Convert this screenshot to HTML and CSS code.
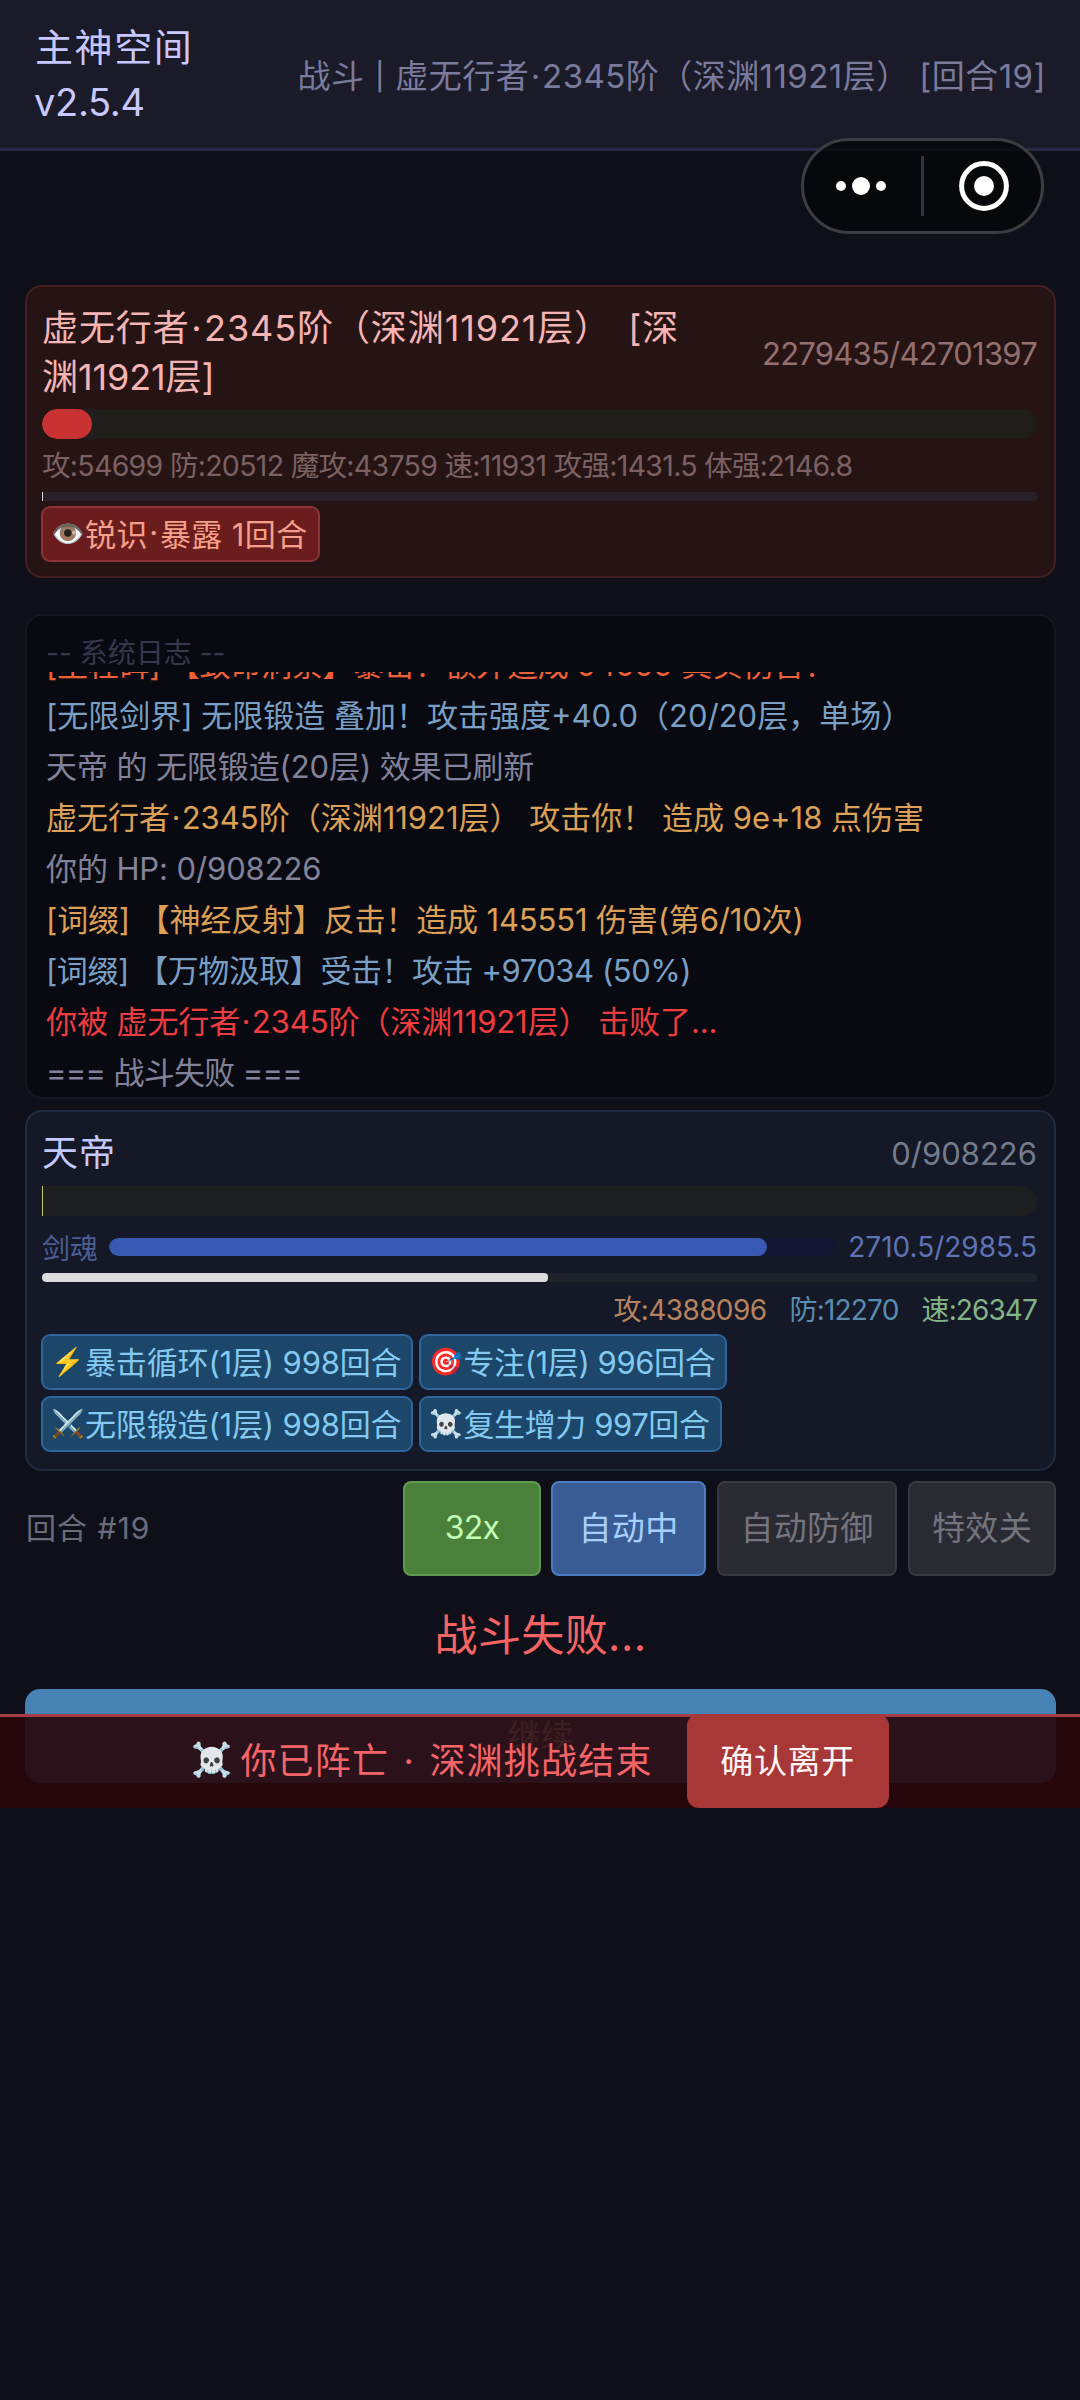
FILE: index.html
```
<!DOCTYPE html>
<html lang="zh-CN">
<head>
<meta charset="utf-8">
<title>主神空间</title>
<link rel="stylesheet" href="styles.css">
</head>
<body>
<header class="header">
  <h1 class="brand">主神空间<span class="version">v2.5.4</span></h1>
  <div class="location">战斗 <span class="sep">|</span> 虚无行者<span class="dot">·</span>2345阶（深渊11921层） [回合19]</div>
</header>

<div class="capsule">
  <svg class="capsule-dots" viewBox="0 0 50 20"><circle cx="5" cy="10" r="5"/><circle cx="25" cy="10" r="9"/><circle cx="45" cy="10" r="5"/></svg>
  <span class="capsule-divider"></span>
  <svg class="capsule-close" viewBox="0 0 50 50"><circle class="ring" cx="25" cy="25" r="22.4"/><circle cx="25" cy="25" r="10"/></svg>
</div>

<main class="main">
  <section class="card enemy">
    <div class="card-head">
      <div class="name"><span class="name-first">虚无行者<span class="dot">·</span>2345阶（深渊11921层） [深</span><br><span class="name-rest">渊11921层]</span></div>
      <div class="hp-text">2279435/42701397</div>
    </div>
    <div class="hp-bar"><div class="hp-fill" style="width:5%"></div></div>
    <div class="enemy-stats">攻:54699 防:20512 魔攻:43759 速:11931 攻强:1431.5 体强:2146.8</div>
    <div class="atb-bar"><div class="atb-fill" style="width:0.15%"></div></div>
    <div class="buffs"><span class="buff debuff"><i class="emoji">👁️</i>锐识<span class="dot">·</span>暴露 1回合</span></div>
  </section>

  <section class="card log">
    <div class="log-title">-- 系统日志 --</div>
    <div class="log-view">
      <p class="crit">[里程碑] 【致命洞察】暴击！额外造成 94999 真实伤害！</p>
      <p class="skill">[无限剑界] 无限锻造 叠加！攻击强度+40.0（20/20层，单场）</p>
      <p class="refresh">天帝 的 无限锻造(20层) 效果已刷新</p>
      <p class="hit">虚无行者<span class="dot">·</span>2345阶（深渊11921层） 攻击你！ 造成 9e+18 点伤害</p>
      <p class="refresh">你的 HP: 0/908226</p>
      <p class="hit counter">[词缀] 【神经反射】反击！造成 145551 伤害(第6/10次)</p>
      <p class="skill absorb">[词缀] 【万物汲取】受击！攻击 +97034 (50%)</p>
      <p class="death">你被 虚无行者<span class="dot">·</span>2345阶（深渊11921层） 击败了...</p>
      <p class="result-line">=== 战斗失败 ===</p>
    </div>
  </section>

  <section class="card player">
    <div class="card-head">
      <div class="name">天帝</div>
      <div class="hp-text">0/908226</div>
    </div>
    <div class="hp-bar"><div class="hp-fill" style="width:0.15%"></div></div>
    <div class="soul">
      <span class="soul-label">剑魂</span>
      <div class="soul-bar"><div class="soul-fill" style="width:90.7%"></div></div>
      <span class="soul-value">2710.5/2985.5</span>
    </div>
    <div class="atb-bar"><div class="atb-fill" style="width:50.9%"></div></div>
    <div class="player-stats"><span class="atk">攻:4388096</span><span class="def">防:12270</span><span class="spd">速:26347</span></div>
    <div class="buffs">
      <span class="buff"><i class="emoji">⚡</i>暴击循环(1层) 998回合</span>
      <span class="buff focus"><i class="emoji">🎯</i>专注(1层) 996回合</span>
      <span class="buff"><i class="emoji">⚔️</i>无限锻造(1层) 998回合</span>
      <span class="buff revive"><i class="emoji">☠️</i>复生增力 997回合</span>
    </div>
  </section>

  <div class="controls">
    <span class="round">回合 #19</span>
    <button class="ctl speed">32x</button>
    <button class="ctl auto">自动中</button>
    <button class="ctl guard">自动防御</button>
    <button class="ctl fx">特效关</button>
  </div>

  <div class="outcome">战斗失败...</div>
  <button class="continue">继续</button>
</main>

<div class="death-bar">
  <span class="death-text"><i class="emoji skull">☠️</i>你已阵亡 · 深渊挑战结束</span>
  <button class="leave">确认离开</button>
</div>
</body>
</html>
```
FILE: styles.css
```
* { box-sizing: border-box; }
body {
  position: relative;
  margin: 0;
  min-height: 2400px;
  background: #0e0f18;
  color: #82829a;
  font-family: Inter, "Noto Sans CJK SC", sans-serif;
  font-weight: 400;
}
button { font: inherit; margin: 0; padding: 0; border: 0; }
p { margin: 0; }
.emoji { font-style: normal; font-family: "Noto Color Emoji", sans-serif; }
.dot { margin: 0 0.045em; }

.header {
  display: flex;
  align-items: center;
  justify-content: space-between;
  height: 151px;
  padding: 2px 34px 0 35px;
  background: #1a1a28;
  border-bottom: 3px solid #2a2a44;
}
.brand { margin: 0; font-size: 38px; line-height: 55px; font-weight: 400; letter-spacing: 1.6px; color: #c8c8ff; }
.version { display: block; letter-spacing: -0.3px; margin-left: -1px; }
.location { margin-top: -3px; font-size: 33px; letter-spacing: 0.45px; color: #7a7a9c; white-space: nowrap; }
.sep { display: inline-block; transform: scaleY(0.82); }

.capsule {
  position: absolute;
  left: 801px;
  top: 138px;
  width: 243px;
  height: 96px;
  border: 3px solid #3c3c43;
  border-radius: 48px;
  background: rgba(5, 6, 10, 0.8);
  display: flex;
  align-items: center;
  padding-left: 32px;
}
.capsule svg { fill: #fff; flex: none; }
.capsule-dots { width: 50px; height: 20px; }
.capsule-divider { width: 3px; height: 60px; margin: 0 35px; background: #35353c; }
.capsule-close { width: 50px; height: 50px; }
.capsule-close .ring { fill: none; stroke: #fff; stroke-width: 5; }

.main { display: flex; flex-direction: column; padding: 134px 24px 0 25px; }
.card { border: 2px solid; border-radius: 17px; padding: 16px 17px 16px 15px; }
.enemy { height: 293px; padding-top: 17px; background: #261414; border-color: #43201f; }
.log { height: 485px; margin-top: 36px; padding: 18px 20px 0 19px; background: #090a11; border-color: #15161f; }
.player { height: 361px; margin-top: 11px; background: #151826; border-color: #1f2b40; padding-top: 17px; }

.card-head { display: flex; justify-content: space-between; align-items: center; }
.name { font-size: 36px; line-height: 49px; white-space: nowrap; }
.name-first { letter-spacing: 0.9px; word-spacing: 6px; }
.name-rest { letter-spacing: -0.1px; }
.enemy .name { color: #f5b4b4; }
.player .name { color: #c3c8ff; letter-spacing: 1px; }
.hp-text { font-size: 31px; letter-spacing: -0.75px; }
.enemy .hp-text { color: #93706f; }
.player .hp-text { color: #747c8c; letter-spacing: 0; }

.hp-bar { height: 30px; margin-top: 7px; border-radius: 15px; overflow: hidden; }
.hp-fill { height: 100%; }
.enemy .hp-bar { background: #211d1b; }
.enemy .hp-fill { background: #c83232; border-radius: 15px; }
.player .hp-bar { background: #1c1e20; margin-top: 8px; border-radius: 0 15px 15px 0; }
.player .hp-fill { background: #c8c864; }

.enemy-stats { margin-top: 8px; font-size: 28.5px; line-height: 38px; letter-spacing: -0.7px; white-space: nowrap; color: #7b6163; }
.atb-bar { height: 9px; margin-top: 7px; border-radius: 0 4px 4px 0; overflow: hidden; background: #29212a; }
.atb-fill { height: 100%; background: #dcdcdc; }
.player .atb-bar { background: #20222b; border-radius: 4px; }
.player .atb-fill { border-radius: 4px; }

.buffs { display: flex; flex-wrap: wrap; gap: 6px; margin: 5px 0 0 -1px; }
.buff {
  display: flex;
  align-items: center;
  height: 56px;
  padding: 0 10px 3px 9px;
  border: 2px solid #2f659a;
  border-radius: 9px;
  background: #1c466a;
  color: #84caf0;
  font-size: 31px;
  letter-spacing: -0.15px;
  white-space: nowrap;
}
.buff .emoji { display: flex; justify-content: center; width: 32px; margin: 2px 1px 0 0; font-size: 27px; letter-spacing: 0; }
.focus { letter-spacing: -0.4px; }
.revive { letter-spacing: -0.4px; }
.debuff { background: #6b1c1c; border-color: #8a3437; color: #f5a08a; letter-spacing: 0.4px; }

.log-title { font-size: 28px; line-height: 38px; color: #37374c; }
.log-view { height: 425px; overflow: hidden; }
.log-view p { font-size: 31px; line-height: 51px; white-space: nowrap; }
.log-view p:first-child { margin-top: -33px; }
.log-view .crit { color: #f06038; letter-spacing: -0.25px; }
.log-view .skill { color: #7a9fc4; letter-spacing: 0; }
.log-view .refresh { letter-spacing: -0.1px; }
.log-view .absorb { letter-spacing: -0.45px; }
.log-view .hit { color: #dca057; }
.log-view .counter { letter-spacing: -0.15px; }
.log-view .death { color: #ee3c40; letter-spacing: -0.08px; }
.log-view .result-line { letter-spacing: -0.7px; }

.soul { display: flex; align-items: center; height: 38px; margin-top: 12px; font-size: 28px; }
.soul-label { width: 67px; color: #4a5f94; }
.soul-bar { flex: 1; height: 18px; border-radius: 9px; background: #131632; overflow: hidden; }
.soul-fill { height: 100%; border-radius: 9px; background: #3759b4; }
.soul-value { width: 202px; text-align: right; color: #5f73b4; }
.player-stats { display: flex; justify-content: flex-end; gap: 23px; margin: 9px 0 2px; font-size: 28px; line-height: 38px; letter-spacing: -0.9px; }
.atk { color: #b5835f; letter-spacing: -0.6px; }
.def { color: #5a8cb0; letter-spacing: -0.8px; }
.spd { color: #82b487; }

.controls { display: flex; align-items: center; height: 95px; margin-top: 10px; }
.round { flex: 1; padding: 0 0 5px 1px; font-size: 30px; letter-spacing: 1px; color: #6c6c7c; }
.ctl { height: 95px; padding-bottom: 5px; border: 2px solid; border-radius: 8px; font-size: 33px; letter-spacing: 0.3px; margin-left: 10px; }
.speed { width: 138px; padding-bottom: 2px; background: #4b803a; border-color: #5f9a50; color: #c0ffb4; font-size: 32px; letter-spacing: -0.8px; }
.auto { width: 155px; background: #395c94; border-color: #4a7cc0; color: #a8d0ff; }
.guard { width: 180px; margin-left: 11px; background: #2a2a33; border-color: #383842; color: #74747e; }
.fx { width: 148px; margin-left: 11px; background: #2a2a33; border-color: #383842; color: #74747e; }

.outcome { margin-top: 29px; text-align: center; font-size: 43px; line-height: 60px; letter-spacing: 0.4px; color: #f56464; }
.continue { height: 94px; margin-top: 24px; padding-bottom: 5px; border-radius: 15px; background: #4682b4; color: #fff; font-size: 33px; }

.death-bar {
  position: absolute;
  left: 0;
  top: 1714px;
  width: 100%;
  height: 94px;
  display: flex;
  align-items: center;
  justify-content: center;
  gap: 34px;
  border-top: 3px solid #a83c44;
  background: rgba(40, 6, 9, 0.9) padding-box;
}
.death-text { display: flex; align-items: center; padding-bottom: 9px; font-size: 36px; letter-spacing: 1.2px; word-spacing: 3px; color: #f56468; white-space: nowrap; }
.skull { width: 49px; margin-top: 3px; font-size: 33px; letter-spacing: 0; }
.leave { width: 202px; height: 94px; margin-top: -3px; padding-bottom: 5px; border-radius: 12px; background: #a83838; color: #fff5f5; font-size: 33px; letter-spacing: 0.7px; }
```
